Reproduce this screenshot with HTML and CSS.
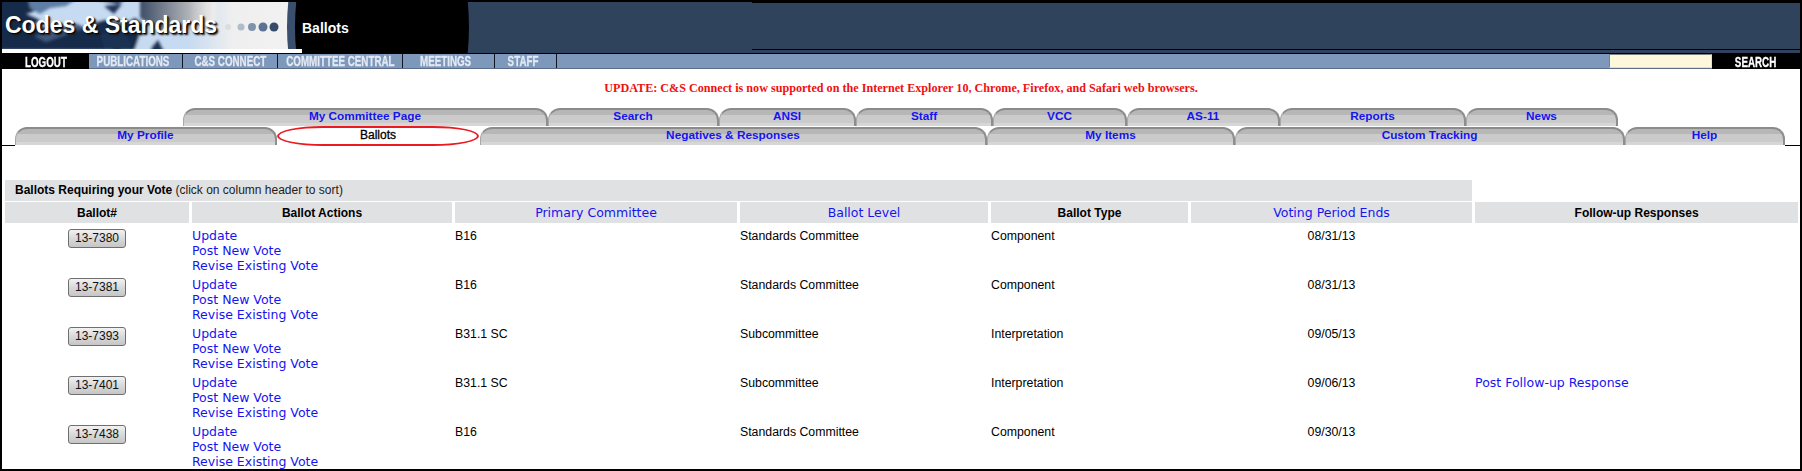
FILE: index.html
```html
<!DOCTYPE html>
<html lang="en">
<head>
<meta charset="utf-8">
<title>Ballots - Codes &amp; Standards</title>
<link rel="stylesheet" href="styles.css">
</head>
<body>
<div class="frame">
  <header class="header">
    <div class="banner">
      <svg class="banner-art" width="468" height="51" viewBox="2 2 468 51" aria-hidden="true">
        <defs>
          <linearGradient id="fade" x1="0" y1="0" x2="1" y2="0">
            <stop offset="0" stop-color="#eeeeee" stop-opacity="0"/>
            <stop offset="0.45" stop-color="#efefef"/>
            <stop offset="1" stop-color="#f1f1f1"/>
          </linearGradient>
          <linearGradient id="grey" x1="0" y1="0" x2="1" y2="0">
            <stop offset="0" stop-color="#3d4d66"/>
            <stop offset="0.45" stop-color="#8f95a0"/>
            <stop offset="0.8" stop-color="#c8c8ca"/>
            <stop offset="1" stop-color="#eeeeee"/>
          </linearGradient>
          <filter id="soft"><feGaussianBlur stdDeviation="1.6"/></filter>
          <clipPath id="photo"><rect x="2" y="2" width="290" height="47"/></clipPath>
        </defs>
        <g clip-path="url(#photo)">
          <rect x="2" y="2" width="290" height="47" fill="#c6daf1"/>
          <g filter="url(#soft)">
            <path d="M140 -2H216V24L190 30H160L140 18Z" fill="url(#grey)"/>
            <path d="M-2 -2H34L44 8L26 14L40 20L30 28L60 26L72 30L105 20L125 24L135 18L146 26L140 50H-2Z" fill="#14294a"/>
            <path d="M28 -2H78L66 6L50 8L40 14L30 8Z" fill="#5f7ea6"/>
            <path d="M34 36L78 24L84 28L46 42Z" fill="#41597c"/>
            <path d="M88 -2H128L118 4Z" fill="#233a5e"/>
            <path d="M104 6L122 4L114 14Z" fill="#20365a"/>
            <path d="M100 34L124 30L132 46L118 52L104 48Z" fill="#1b3052"/>
            <path d="M140 34L152 38L158 52H134Z" fill="#c6daf1"/>
            <path d="M152 46L158 40L164 52H150Z" fill="#1d3354"/>
          </g>
          <rect x="188" y="2" width="100" height="47" fill="url(#fade)"/>
        </g>
        <circle cx="228" cy="27" r="3" fill="#dcdde0"/>
        <circle cx="241" cy="27" r="3.5" fill="#aebccb"/>
        <circle cx="252" cy="27" r="4" fill="#7f93ad"/>
        <circle cx="263" cy="27" r="4.5" fill="#5c7293"/>
        <circle cx="274" cy="27" r="4.5" fill="#364b6a"/>
        <ellipse cx="378" cy="27" rx="91" ry="150" fill="#3a4f6e"/>
        <ellipse cx="382" cy="27" rx="87" ry="150" fill="#000000"/>
        <rect x="2" y="49" width="300" height="4" fill="#ffffff"/>
      </svg>
      <div class="brand">Codes &amp; Standards</div>
      <div class="page-title">Ballots</div>
    </div>
    <div class="header-rule"></div>
  </header>

  <nav class="nav">
    <a class="nav-item nav-dark nav-logout"><span>LOGOUT</span></a>
    <a class="nav-item nav-pub"><span>PUBLICATIONS</span></a>
    <a class="nav-item nav-connect"><span>C&amp;S CONNECT</span></a>
    <a class="nav-item nav-central"><span>COMMITTEE CENTRAL</span></a>
    <a class="nav-item nav-meet"><span>MEETINGS</span></a>
    <a class="nav-item nav-staff"><span>STAFF</span></a>
    <span class="nav-fill"></span>
    <input class="nav-input" type="text" aria-label="Search">
    <a class="nav-item nav-dark nav-search"><span>SEARCH</span></a>
  </nav>

  <p class="notice">UPDATE: C&amp;S Connect is now supported on the Internet Explorer 10, Chrome, Firefox, and Safari web browsers.</p>

  <div class="tabs">
    <div class="tab-row tab-row-top">
      <a class="tab">My Committee Page</a>
      <a class="tab">Search</a>
      <a class="tab">ANSI</a>
      <a class="tab">Staff</a>
      <a class="tab">VCC</a>
      <a class="tab">AS-11</a>
      <a class="tab">Reports</a>
      <a class="tab">News</a>
    </div>
    <div class="tab-row tab-row-bottom">
      <a class="tab">My Profile</a>
      <a class="tab tab-active">Ballots</a>
      <a class="tab">Negatives &amp; Responses</a>
      <a class="tab">My Items</a>
      <a class="tab">Custom Tracking</a>
      <a class="tab">Help</a>
    </div>
  </div>

  <table class="ballots">
    <colgroup>
      <col class="c1"><col class="c2"><col class="c3"><col class="c4"><col class="c5"><col class="c6"><col class="c7">
    </colgroup>
    <thead>
      <tr>
        <th class="title" colspan="6"><b>Ballots Requiring your Vote</b> <span>(click on column header to sort)</span></th>
        <td class="title-gap"></td>
      </tr>
      <tr class="heads">
        <th>Ballot#</th>
        <th>Ballot Actions</th>
        <th class="sort"><a>Primary Committee</a></th>
        <th class="sort"><a>Ballot Level</a></th>
        <th>Ballot Type</th>
        <th class="sort"><a>Voting Period Ends</a></th>
        <th>Follow-up Responses</th>
      </tr>
    </thead>
    <tbody>
      <tr>
        <td class="num"><button class="ballot-btn">13-7380</button></td>
        <td class="acts"><a>Update</a><a>Post New Vote</a><a>Revise Existing Vote</a></td>
        <td>B16</td><td>Standards Committee</td><td>Component</td><td class="date">08/31/13</td><td></td>
      </tr>
      <tr>
        <td class="num"><button class="ballot-btn">13-7381</button></td>
        <td class="acts"><a>Update</a><a>Post New Vote</a><a>Revise Existing Vote</a></td>
        <td>B16</td><td>Standards Committee</td><td>Component</td><td class="date">08/31/13</td><td></td>
      </tr>
      <tr>
        <td class="num"><button class="ballot-btn">13-7393</button></td>
        <td class="acts"><a>Update</a><a>Post New Vote</a><a>Revise Existing Vote</a></td>
        <td>B31.1 SC</td><td>Subcommittee</td><td>Interpretation</td><td class="date">09/05/13</td><td></td>
      </tr>
      <tr>
        <td class="num"><button class="ballot-btn">13-7401</button></td>
        <td class="acts"><a>Update</a><a>Post New Vote</a><a>Revise Existing Vote</a></td>
        <td>B31.1 SC</td><td>Subcommittee</td><td>Interpretation</td><td class="date">09/06/13</td><td class="acts"><a>Post Follow-up Response</a></td>
      </tr>
      <tr>
        <td class="num"><button class="ballot-btn">13-7438</button></td>
        <td class="acts"><a>Update</a><a>Post New Vote</a><a>Revise Existing Vote</a></td>
        <td>B16</td><td>Standards Committee</td><td>Component</td><td class="date">09/30/13</td><td></td>
      </tr>
    </tbody>
  </table>
</div>
</body>
</html>
```

FILE: styles.css
```css
* { box-sizing: border-box; }
html, body { margin: 0; padding: 0; background: #fff; }
.frame {
  width: 1802px;
  height: 471px;
  border: 2px solid #000;
  overflow: hidden;
  background: #fff;
  font-family: "Liberation Sans", Arial, sans-serif;
  color: #000;
}

/* Header */
.header {
  display: flex;
  height: 51px;
  background: #2f435c;
}
.banner {
  position: relative;
  flex: 0 0 468px;
  height: 51px;
}
.banner-art { position: absolute; left: 0; top: 0; display: block; }
.brand {
  position: absolute;
  left: 3px;
  top: 8px;
  font-size: 23px;
  line-height: 30px;
  font-weight: 700;
  color: #fff;
  white-space: nowrap;
  text-shadow: 1px 1px 1px #000, 2px 2px 2px #1a1a1a;
}
.page-title {
  position: absolute;
  left: 300px;
  top: 18px;
  font-size: 14px;
  line-height: 16px;
  font-weight: 700;
  color: #fff;
}
.header-rule {
  flex: 1;
  margin-left: 282px;
  height: 48px;
  border-top: 1px solid #000;
  border-bottom: 1px solid #000;
}

/* Nav */
.nav {
  display: flex;
  height: 16px;
  background: #7e98bc;
  border-top: 1px solid #000;
  border-bottom: 1px solid #5b6d88;
}
.nav-item {
  display: flex;
  align-items: center;
  justify-content: center;
  font-size: 14px;
  line-height: 14px;
  font-weight: 700;
  color: #e4eaf3;
  border-right: 1px solid #10151f;
  white-space: nowrap;
  -webkit-text-stroke: 0.3px currentColor;
}
.nav-item span {
  flex: none;
  display: block;
  transform: scaleX(0.7);
}
.nav-dark {
  background: #000;
  color: #fff;
  margin-bottom: -1px;
  border-right: 0;
}
.nav-logout { width: 87px; }
.nav-pub { width: 94px; padding-right: 6px; }
.nav-connect { width: 95px; }
.nav-central { width: 125px; }
.nav-meet { width: 92px; padding-right: 6px; }
.nav-staff { width: 62px; padding-right: 4px; }
.nav-fill { flex: 1; }
.nav-input {
  width: 103px;
  height: 14px;
  padding: 0;
  border: 1px solid #e4e0c8;
  border-top-color: #808080;
  border-left-color: #808080;
  background: #fdf8dc;
}
.nav-search { width: 88px; }

/* Notice */
.notice {
  margin: 0;
  padding-top: 12px;
  height: 39px;
  text-align: center;
  font-family: "Liberation Serif", "Times New Roman", serif;
  font-size: 12.15px;
  line-height: 15px;
  font-weight: 700;
  color: #f01010;
}

/* Tabs */
.tab-row { display: grid; }
.tab-row-top {
  margin-left: 181px;
  grid-template-columns: 365px 171px 137px 137px 134px 153px 186px 152px;
  height: 18px;
  margin-bottom: 1px;
}
.tab-row-bottom {
  position: relative;
  margin-left: 13px;
  grid-template-columns: 262px 203px 507px 248px 390px 160px;
  height: 18px;
}
.tab-row-bottom::before,
.tab-row-bottom::after {
  content: "";
  position: absolute;
  top: 18px;
  height: 1px;
  background: #000;
}
.tab-row-bottom::before { left: -13px; width: 13px; }
.tab-row-bottom::after { left: 1770px; width: 15px; }
.tab {
  display: block;
  height: 18px;
  border-top: 2px solid #8b8b8b;
  border-left: 1px solid #a8a8a8;
  border-right: 2px solid #8e8e8e;
  border-radius: 12px 12px 0 0;
  background: linear-gradient(#b7b7b7 0, #b7b7b7 5px, #cccbcb 5px, #cccbcb 13px, #d6d6d6 13px);
  text-align: center;
  font-size: 11.8px;
  line-height: 12px;
  font-weight: 700;
  color: #1414f0;
}
.tab-active {
  height: 20px;
  width: 202px;
  margin-top: -1px;
  margin-bottom: -1px;
  position: relative;
  border: 2px solid #ea1a20;
  border-radius: 46px / 50%;
  background: #fff;
  color: #000;
  font-size: 12px;
  font-weight: 400;
  line-height: 14px;
  -webkit-text-stroke: 0.3px #000;
}

/* Table */
.ballots {
  table-layout: fixed;
  width: 1799px;
  margin-top: 35px;
  border-collapse: separate;
  border-spacing: 3px 0;
  font-size: 12.3px;
  line-height: 15px;
}
.c1 { width: 184px; }
.c2 { width: 260px; }
.c3 { width: 282px; }
.c4 { width: 248px; }
.c5 { width: 197px; }
.c6 { width: 281px; }
.c7 { width: 323px; }
.title {
  height: 22px;
  padding: 0 10px;
  background: #e0e1e3;
  background-clip: padding-box;
  border-bottom: 1px solid #fff;
  text-align: left;
  font-size: 12px;
  font-weight: 400;
}
.title span { color: #1c1c1c; }
.heads th {
  height: 24px;
  padding: 1px 0 0;
  background: #e0e1e3;
  background-clip: padding-box;
  border-bottom: 3px solid #fff;
  font-size: 12px;
  font-weight: 700;
  text-align: center;
}
.heads .sort { font-weight: 400; }
.heads .sort a,
.acts a {
  color: #1414f0;
  font-family: "DejaVu Sans", Verdana, sans-serif;
  font-size: 12.5px;
}
tbody td {
  height: 49px;
  padding: 3px 0 0;
  vertical-align: top;
  text-align: left;
}
tbody .acts { padding-top: 2px; }
.acts a { display: block; white-space: nowrap; }
tbody .num { text-align: center; }
tbody .date { text-align: center; }
.ballot-btn {
  display: block;
  width: 58px;
  height: 19px;
  margin: 0 auto;
  padding: 0;
  border: 1px solid #6f6f6f;
  border-radius: 3px;
  background: linear-gradient(#f2f2f2, #d9d9d9 50%, #c6c6c6);
  font-family: "Liberation Sans", Arial, sans-serif;
  font-size: 12px;
  line-height: 15px;
  color: #111;
}
```
